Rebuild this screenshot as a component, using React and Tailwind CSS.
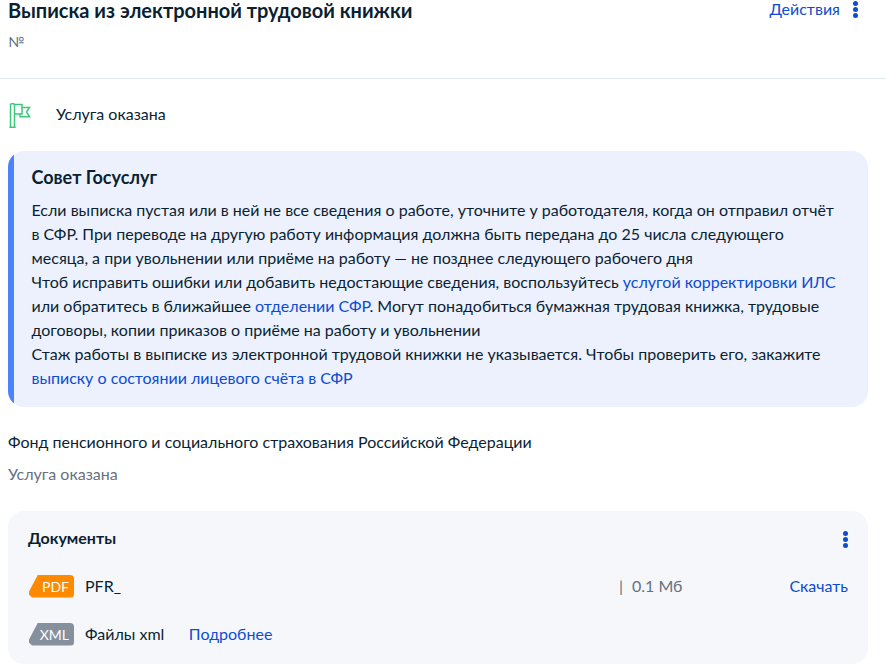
import React from "react";

const Dots = () => (
  <span className="flex w-[5px] flex-col gap-[1px]">
    <span className="h-[5px] w-[5px] rounded-full bg-[#0d4cd3]" />
    <span className="h-[5px] w-[5px] rounded-full bg-[#0d4cd3]" />
    <span className="h-[5px] w-[5px] rounded-full bg-[#0d4cd3]" />
  </span>
);

const Flag = () => (
  <svg width="22" height="25" viewBox="0 0 22 25" fill="none" stroke="#3ec97a" strokeWidth="1.5">
    <path d="M1.5 24V1.5L2.5 0.8H4.5L5.5 1.5V24M0.3 24.2H6.7" />
    <path d="M5.5 1.5H13V4.5H20.5L17.5 9L20.5 13.8H11V11H5.5" />
    <path d="M11 11H13V4.5" />
  </svg>
);

const FileBadge = ({ label, color }) => (
  <span
    className={`ml-px flex h-[23px] w-[45px] shrink-0 items-center justify-end rounded-[4px] pr-[5px] text-[14px] leading-[23px] text-white [clip-path:polygon(9px_0,100%_0,100%_100%,3px_100%,0_calc(100%-3px),0_calc(100%-6px))] ${color}`}
  >
    {label}
  </span>
);

const A = ({ children }) => <a className="text-[#0d4cd3]">{children}</a>;

export default function App() {
  return (
    <div className="h-[667px] overflow-hidden bg-white font-['Lato','Noto_Sans',sans-serif] text-[#0b1f33]">
      <div className="flex h-[79px] items-start justify-between border-b border-[#e1e7ef] pl-2 pr-[28px]">
        <div>
          <h1 className="text-[20px] font-bold leading-[21px]">Выписка из электронной трудовой книжки</h1>
          <div className="mt-[11px] text-[14px] leading-[20px] text-[#66727f]">№</div>
        </div>
        <div className="flex h-[18px] items-center gap-[13px]">
          <a className="-ml-1 text-[16px] leading-[18px] text-[#0d4cd3]">Действия</a>
          <Dots />
        </div>
      </div>

      <div className="flex h-[72px] items-center pb-[2px] pl-[9px]">
        <div className="w-[47px] pt-[2px]"><Flag /></div>
        <span className="text-[16px]">Услуга оказана</span>
      </div>

      <div className="ml-2 mr-[18px] flex h-[256px] overflow-hidden rounded-2xl bg-[#ecf1fd]">
        <div className="w-[6px] shrink-0 bg-[#4d83fa]" />
        <div className="pl-[17.5px] pr-[26px] pt-[14px]">
          <h2 className="text-[18px] font-bold leading-[24px]">Совет Госуслуг</h2>
          <p className="mt-[9px] text-[16px] leading-[24px]">
            Если выписка пустая или в ней не все сведения о работе, уточните у работодателя, когда он отправил отчёт в СФР. При переводе на другую работу информация должна быть передана до 25 числа следующего месяца, а при увольнении или приёме на работу — не позднее следующего рабочего дня
            <br />
            Чтоб исправить ошибки или добавить недостающие сведения, воспользуйтесь <A>услугой корректировки ИЛС</A> или обратитесь в ближайшее <A>отделении СФР</A>. Могут понадобиться бумажная трудовая книжка, трудовые договоры, копии приказов о приёме на работу и увольнении
            <br />
            Стаж работы в выписке из электронной трудовой книжки не указывается. Чтобы проверить его, закажите <A>выписку о состоянии лицевого счёта в СФР</A>
          </p>
        </div>
      </div>

      <div className="mt-[23px] pl-2 text-[16px] leading-[24px]">Фонд пенсионного и социального страхования Российской Федерации</div>
      <div className="mt-[8px] pl-2 text-[16px] leading-[24px] text-[#66727f]">Услуга оказана</div>

      <div className="ml-2 mr-[18px] mt-[25px] h-[153px] rounded-2xl bg-[#f5f7fb] px-5 pt-[15px]">
        <div className="flex h-[24px] items-center justify-between">
          <h3 className="text-[16px] font-bold">Документы</h3>
          <span className="pt-[2px]"><Dots /></span>
        </div>
        <div className="mt-[24px] flex h-[24px] items-center text-[16px]">
          <FileBadge label="PDF" color="bg-[#ff8a00]" />
          <span className="ml-[11px]">PFR_</span>
          <span className="ml-auto flex w-[229px] items-center justify-between">
            <span className="text-[#66727f]"><span className="mr-[9px]">|</span>0.1 Мб</span>
            <A>Скачать</A>
          </span>
        </div>
        <div className="mt-[24px] flex h-[24px] items-center text-[16px]">
          <FileBadge label="XML" color="bg-[#86909c]" />
          <span className="ml-[11px]">Файлы xml</span>
          <span className="ml-[24.5px]"><A>Подробнее</A></span>
        </div>
      </div>
    </div>
  );
}
